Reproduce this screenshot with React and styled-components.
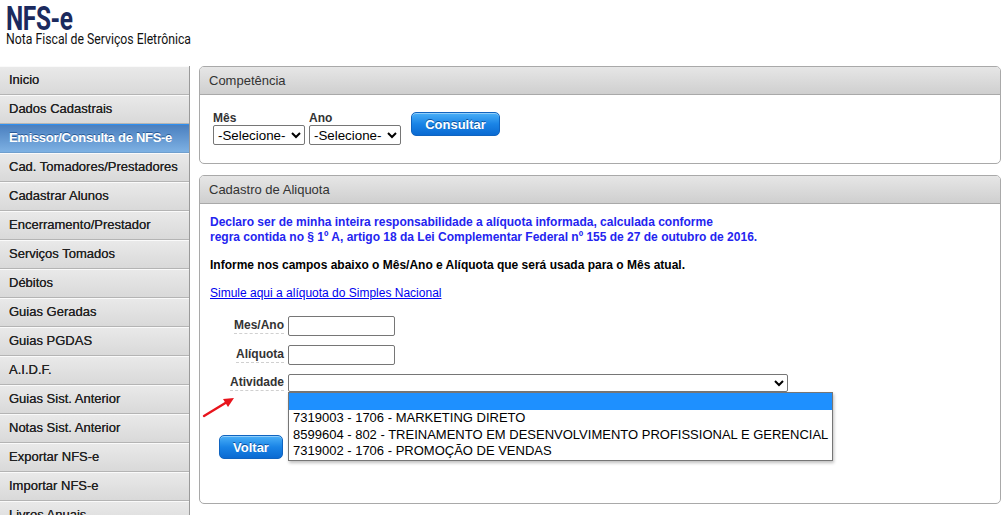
import React from 'react'
import styled, { createGlobalStyle, css } from 'styled-components'

const MENU = [
	'Inicio',
	'Dados Cadastrais',
	'Emissor/Consulta de NFS-e',
	'Cad. Tomadores/Prestadores',
	'Cadastrar Alunos',
	'Encerramento/Prestador',
	'Serviços Tomados',
	'Débitos',
	'Guias Geradas',
	'Guias PGDAS',
	'A.I.D.F.',
	'Guias Sist. Anterior',
	'Notas Sist. Anterior',
	'Exportar NFS-e',
	'Importar NFS-e',
	'Livros Anuais',
]

const ACTIVE = 2

const ATIVIDADES = [
	'',
	'7319003 - 1706 - MARKETING DIRETO',
	'8599604 - 802 - TREINAMENTO EM DESENVOLVIMENTO PROFISSIONAL E GERENCIAL',
	'7319002 - 1706 - PROMOÇÃO DE VENDAS',
]

const Arrow = () => (
	<ArrowSvg width="36" height="26" viewBox="0 0 36 26">
		<line x1="3" y1="22" x2="26" y2="8" stroke="#e8141c" strokeWidth="2.4" strokeLinecap="round" />
		<polygon points="33,4 22,5 27,13" fill="#e8141c" />
	</ArrowSvg>
)

const App = () => (
	<>
		<GlobalStyle />
		<Header>
			<Logo>NFS-e</Logo>
			<Subtitle>Nota Fiscal de Serviços Eletrônica</Subtitle>
		</Header>
		<Layout>
			<Sidebar>
				{ MENU.map((item, i) => (
					<MenuItem key={ item } active={ i === ACTIVE }>{ item }</MenuItem>
				)) }
			</Sidebar>
			<Main>
				<Panel>
					<PanelHead>Competência</PanelHead>
					<PanelBody>
						<FilterRow>
							<Field>
								<SmallLabel>Mês</SmallLabel>
								<Select>
									<option>-Selecione-</option>
								</Select>
							</Field>
							<Field>
								<SmallLabel>Ano</SmallLabel>
								<Select>
									<option>-Selecione-</option>
								</Select>
							</Field>
							<Button wide>Consultar</Button>
						</FilterRow>
					</PanelBody>
				</Panel>
				<Panel tall>
					<PanelHead>Cadastro de Aliquota</PanelHead>
					<PanelBody>
						<Notice>
							Declaro ser de minha inteira responsabilidade a alíquota informada, calculada conforme<br />
							regra contida no § 1º A, artigo 18 da Lei Complementar Federal nº 155 de 27 de outubro de 2016.
						</Notice>
						<Instruction>Informe nos campos abaixo o Mês/Ano e Alíquota que será usada para o Mês atual.</Instruction>
						<SimLink href="#">Simule aqui a alíquota do Simples Nacional</SimLink>
						<FormGrid>
							<FormLabel>Mes/Ano</FormLabel>
							<TextInput />
							<FormLabel>Alíquota</FormLabel>
							<TextInput />
							<FormLabel>Atividade</FormLabel>
							<ActivityWrap>
								<Select wide><option></option></Select>
								<DropList>
									{ ATIVIDADES.map((opt, i) => (
										<DropOption key={ i } selected={ i === 0 }>{ opt }</DropOption>
									)) }
								</DropList>
								<Arrow />
							</ActivityWrap>
						</FormGrid>
						<Button>Voltar</Button>
					</PanelBody>
				</Panel>
			</Main>
		</Layout>
	</>
)

const GlobalStyle = createGlobalStyle`
	body {
		margin: 0;
		background: #fff;
		font-family: "Liberation Sans", Arial, sans-serif;
		overflow: hidden;
	}
`

const Header = styled.header`
	height: 66px;
	padding: 7px 0 0 6px;
	box-sizing: border-box;
`

const Logo = styled.div`
	font-family: Roboto, "Liberation Sans", sans-serif;
	font-weight: 700;
	font-size: 33px;
	line-height: 24px;
	height: 24px;
	color: #1b2a5e;
	transform: scaleX(0.74);
	transform-origin: left;
	letter-spacing: -0.5px;
`

const Subtitle = styled.div`
	font-family: Roboto, "Liberation Sans", sans-serif;
	font-size: 15.5px;
	line-height: 15px;
	margin-top: 1px;
	color: #111;
	transform: scaleX(0.79);
	transform-origin: left;
	white-space: nowrap;
`

const Layout = styled.div`
	display: flex;
	align-items: flex-start;
`

const Sidebar = styled.nav`
	width: 189px;
	border-right: 1px solid #9a9a9a;
	flex-shrink: 0;
`

const MenuItem = styled.div`
	height: 27px;
	line-height: 26px;
	padding-left: 9px;
	font-size: 13px;
	color: #222;
	text-shadow: 0 0 0.5px #333;
	white-space: nowrap;
	background: linear-gradient(#e9e9e9, #d9d9d9);
	border-top: 1px solid #fafafa;
	border-bottom: 1px solid #b4b4b4;
	${ ({ active }) => active && css`
		color: #fff;
		font-weight: 700;
		letter-spacing: -0.3px;
		text-shadow: 0 -1px 0 #2a5c98;
		background: linear-gradient(#4a7fbf, #7eb1e3);
		border-top: 1px solid #2e8ff0;
		border-bottom: 1px solid #6f9fce;
	` }
`

const Main = styled.main`
	flex: 1;
	padding: 0 6px 0 9px;
	min-width: 0;
`

const Panel = styled.section`
	border: 1px solid #a9a9a9;
	border-radius: 5px;
	margin-bottom: 11px;
	height: ${ ({ tall }) => tall ? '329px' : '98px' };
	box-sizing: border-box;
`

const PanelHead = styled.div`
	height: 27px;
	line-height: 27px;
	padding-left: 9px;
	font-size: 13px;
	color: #333;
	border-radius: 4px 4px 0 0;
	background: linear-gradient(#e6e6e6, #cfcfcf);
	border-bottom: 1px solid #a9a9a9;
`

const PanelBody = styled.div`
	padding: 11px 10px 0;
	position: relative;
`

const FilterRow = styled.div`
	display: flex;
	align-items: flex-start;
	gap: 4px;
	padding: 5px 0 0 3px;
`

const Field = styled.div`
	display: flex;
	flex-direction: column;
`

const SmallLabel = styled.span`
	font-size: 12px;
	font-weight: 700;
	color: #333;
	line-height: 14px;
`

const Select = styled.select`
	font-family: "Liberation Sans", Arial, sans-serif;
	font-size: 13.33px;
	height: ${ ({ wide }) => wide ? '18px' : '20px' };
	width: ${ ({ wide }) => wide ? '500px' : '92px' };
	border: 1px solid #767676;
	border-radius: 2px;
	background: #fff;
	color: #000;
	padding: 0;
	box-sizing: border-box;
`

const Button = styled.button`
	font-family: "Liberation Sans", Arial, sans-serif;
	font-size: 13px;
	font-weight: 700;
	color: #fff;
	text-shadow: 0 -1px 0 #0b4f9c;
	width: ${ ({ wide }) => wide ? '89px' : '64px' };
	height: 24px;
	margin: ${ ({ wide }) => wide ? '1px 0 0 6px' : '43px 0 0 9px' };
	border: 1px solid #1064c0;
	border-radius: 5px;
	background: linear-gradient(#4ab0f8, #1a84e6 50%, #0a6ad2);
	box-shadow: inset 0 1px 0 rgba(255,255,255,0.4);
	padding: 0;
`

const Notice = styled.p`
	margin: 0;
	font-size: 12px;
	font-weight: 700;
	line-height: 15px;
	color: #2424f0;
`

const Instruction = styled.p`
	margin: 13px 0 0;
	font-size: 12px;
	font-weight: 700;
	line-height: 15px;
	color: #000;
`

const SimLink = styled.a`
	display: inline-block;
	margin-top: 13px;
	font-size: 12px;
	line-height: 15px;
	color: #0000ee;
`

const FormGrid = styled.div`
	display: grid;
	grid-template-columns: 74px auto;
	column-gap: 4px;
	row-gap: 9px;
	align-items: center;
	justify-items: start;
	margin-top: 15px;
`

const FormLabel = styled.span`
	justify-self: end;
	font-size: 12px;
	font-weight: 700;
	color: #333;
	line-height: 15px;
	border-bottom: 1px dashed #d0d0d0;
`

const TextInput = styled.input`
	width: 107px;
	height: 20px;
	box-sizing: border-box;
	border: 1px solid #767676;
	border-radius: 2px;
`

const ActivityWrap = styled.div`
	position: relative;
	height: 18px;
`

const DropList = styled.div`
	position: absolute;
	left: 0;
	top: 18px;
	width: 543px;
	border: 1px solid #767676;
	background: #fff;
	box-shadow: 1px 2px 3px rgba(0,0,0,0.25);
	z-index: 2;
`

const DropOption = styled.div`
	height: ${ ({ selected }) => selected ? '17px' : '16.5px' };
	line-height: 16px;
	padding-left: 4px;
	font-size: 13px;
	color: #000;
	white-space: nowrap;
	background: ${ ({ selected }) => selected ? '#1e90ff' : '#fff' };
`

const ArrowSvg = styled.svg`
	position: absolute;
	left: -87px;
	top: 20px;
`

export default App
